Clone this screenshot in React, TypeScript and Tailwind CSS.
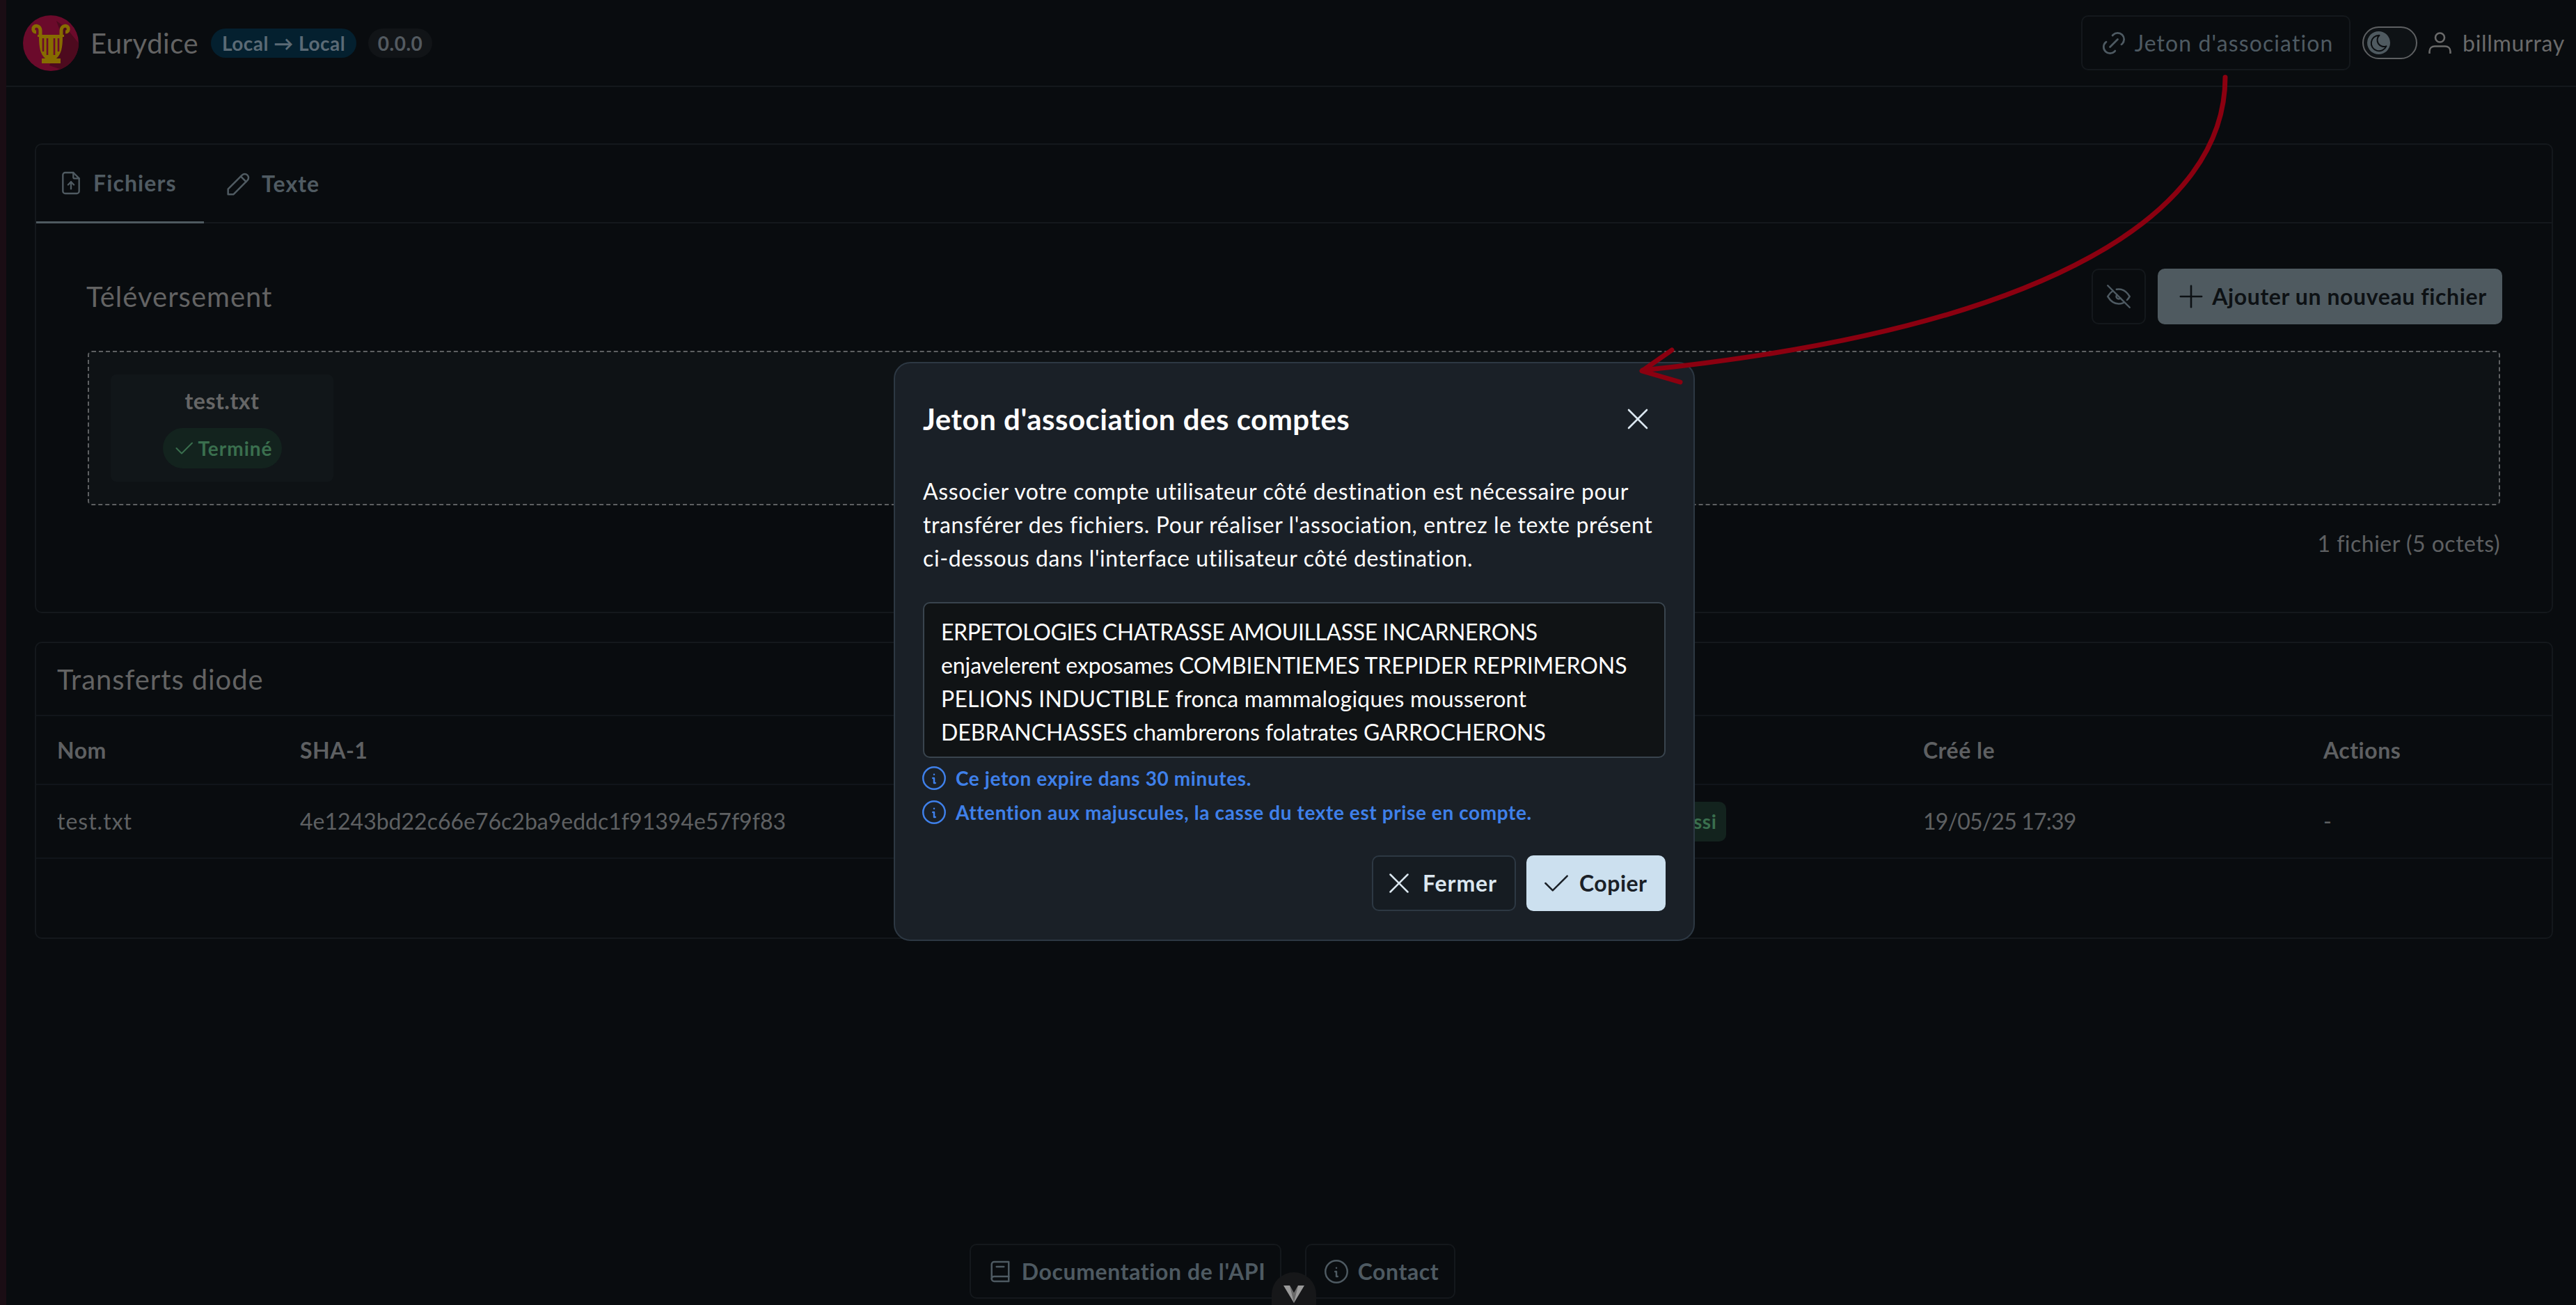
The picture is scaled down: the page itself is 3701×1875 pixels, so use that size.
import { TbBook2, TbCheck, TbEyeOff, TbFileUpload, TbInfoCircle, TbLink, TbMoon, TbPencil, TbPlus, TbX } from 'react-icons/tb'

function Logo() {
  return (
    <svg viewBox="0 0 80 80" className="w-[80px] h-[80px] shrink-0">
      <circle cx="40" cy="40" r="40" fill="#6b0a2b" />
      <path d="M48 8 L62 18 L80 40 A40 40 0 0 1 54 77.5 L38 72 L56 30 Z" fill="#4d0a1e" />
      <g fill="none" stroke="#866b00" strokeWidth="5">
        <path d="M25 30 V22 C25 15 17 13 15 18 C14 22 16 24 19 24" />
        <path d="M55 30 V22 C55 15 63 13 65 18 C66 22 64 24 61 24" />
      </g>
      <path d="M21 28 H59 V31 H57 C57 46 55 56 48 62 H32 C25 56 23 46 23 31 H21 Z" fill="#866b00" />
      <path d="M29 33 V52 M35 33 V57 M45 33 V57 M51 33 V52" stroke="#6b0a2b" strokeWidth="2.6" />
      <rect x="27" y="62" width="27" height="7" fill="#866b00" />
    </svg>
  )
}

function UserGlyph() {
  return (
    <svg viewBox="0 0 33 31" className="ml-[16px] w-[33px] h-[31px]" fill="none" stroke="#6a6a6a" strokeWidth="2.6">
      <circle cx="16.5" cy="8" r="6.5" />
      <path d="M1.5 31 V28 C1.5 23 5 20.5 9 20.5 H24 C28 20.5 31.5 23 31.5 28 V31" />
    </svg>
  )
}

function Arrow() {
  return (
    <svg viewBox="0 0 3701 1875" className="absolute inset-0 w-[3701px] h-[1875px] pointer-events-none z-20">
      <g fill="none" stroke="#8b0010" strokeWidth="7" strokeLinecap="round" strokeLinejoin="round">
        <path d="M3197 111 C3197 300 2960 470 2360 532" />
        <path d="M2402 503 L2359 533 L2414 549" />
      </g>
    </svg>
  )
}

function Modal() {
  return (
    <div className="absolute left-[1284px] top-[520px] w-[1151px] h-[832px] z-10 bg-[#1a2027] border-2 border-[#2d3843] rounded-[24px] px-[40px] text-white">
      <div className="h-[160px] flex items-center justify-between">
        <h2 className="text-[42px] font-bold tracking-[0.5px]">Jeton d'association des comptes</h2>
        <TbX strokeWidth={1.2} className="w-[52px] h-[52px] mr-[14px] text-[#dbe7f0]" />
      </div>
      <p className="text-[32px] leading-[48px] tracking-[0.6px]">
        Associer votre compte utilisateur côté destination est nécessaire pour transférer des fichiers. Pour réaliser
        l'association, entrez le texte présent <span className="whitespace-nowrap">ci-dessous</span> dans l'interface utilisateur côté destination.
      </p>
      <div className="mt-[39px] h-[224px] bg-[#101315] border-2 border-[#39444e] rounded-[10px] px-[24px] py-[17px] text-[32px] leading-[48px] tracking-normal">
        <div className="tracking-[-0.4px]">ERPETOLOGIES CHATRASSE AMOUILLASSE INCARNERONS</div>
        <div className="tracking-[-0.1px]">enjavelerent exposames COMBIENTIEMES TREPIDER REPRIMERONS</div>
        <div className="tracking-[0.2px]">PELIONS INDUCTIBLE fronca mammalogiques mousseront</div>
        <div>DEBRANCHASSES chambrerons folatrates GARROCHERONS</div>
      </div>
      <div className="mt-[9px] flex flex-col gap-[9px] text-[#3f80ea] text-[28px] font-bold tracking-[0.6px]">
        <div className="flex items-center gap-[10px] h-[40px] -ml-[5px]">
          <TbInfoCircle strokeWidth={1.4} className="w-[42px] h-[42px]" />
          <span>Ce jeton expire dans 30 minutes.</span>
        </div>
        <div className="flex items-center gap-[10px] h-[40px] -ml-[5px]">
          <TbInfoCircle strokeWidth={1.4} className="w-[42px] h-[42px]" />
          <span>Attention aux majuscules, la casse du texte est prise en compte.</span>
        </div>
      </div>
      <div className="mt-[42px] flex justify-end gap-[15px]">
        <button className="w-[207px] h-[80px] flex items-center pl-[12px] gap-[9px] bg-[#161c22] border-2 border-[#2d3843] rounded-[10px] text-[32px] font-bold tracking-[0.9px] text-[#dbe7f0]">
          <TbX strokeWidth={1.2} className="w-[50px] h-[50px]" />
          Fermer
        </button>
        <button className="w-[200px] h-[80px] flex items-center pl-[17px] gap-[9px] bg-[#cce0ef] rounded-[10px] text-[32px] font-bold text-[#1a2027]">
          <TbCheck strokeWidth={1.2} className="w-[50px] h-[50px]" />
          Copier
        </button>
      </div>
    </div>
  )
}

export default function App() {
  return (
    <div className="relative w-[3701px] h-[1875px] overflow-hidden flex bg-[#090c0f] text-[#5e6062] tracking-[0.5px] font-['Lato',sans-serif]">
      <div className="w-[9px] shrink-0 bg-[#1a0d14]" />
      <div className="flex-1 flex flex-col min-w-0">
        <header className="h-[125px] shrink-0 border-b-2 border-[#14181c] flex items-center pl-[24px] pr-[16px]">
          <Logo />
          <span className="ml-[17px] text-[40px] text-[#636363]">Eurydice</span>
          <span className="ml-[18px] h-[42px] w-[209px] flex items-center justify-center rounded-full bg-[#04202f] text-[28px] font-bold text-[#5b6a75]">Local → Local</span>
          <span className="ml-[17px] h-[42px] w-[92px] flex items-center justify-center rounded-full bg-[#111417] text-[28px] font-bold text-[#535a60]">0.0.0</span>
          <button className="ml-auto w-[387px] h-[79px] flex items-center justify-center gap-[8px] border-2 border-[#14181c] rounded-[10px] text-[32px] tracking-[1.1px] text-[#4e5a62]">
            <TbLink strokeWidth={1.5} className="w-[44px] h-[44px]" />
            Jeton d'association
          </button>
          <div className="ml-[17px] w-[79px] h-[47px] rounded-full border-2 border-[#5e6062] bg-[#0e1215] flex items-center pl-[5px]">
            <span className="w-[33px] h-[33px] rounded-full bg-[#4f5a60] flex items-center justify-center">
              <TbMoon strokeWidth={1.6} className="w-[30px] h-[30px] text-[#0b0e11]" />
            </span>
          </div>
          <UserGlyph />
          <span className="ml-[16px] text-[32px] tracking-[0.7px] text-[#6a6a6a]">billmurray</span>
        </header>

        <main className="pt-[81px] pl-[41px] pr-[33px] flex flex-col gap-[41px]">
          <section className="h-[675px] border-2 border-[#14181c] rounded-[10px]">
            <div className="h-[113px] border-b-2 border-[#14181c] flex">
              <div className="w-[241px] h-[113px] border-b-[3px] border-[#4f5a60] flex items-center pl-[30px] gap-[12px] text-[#505b62] text-[32px] font-bold tracking-[1.1px]">
                <TbFileUpload strokeWidth={1.4} className="w-[40px] h-[40px]" />
                Fichiers
              </div>
              <div className="flex items-center pl-[27px] gap-[10px] text-[#505b62] text-[32px] font-bold tracking-[1.1px]">
                <TbPencil strokeWidth={1.3} className="w-[46px] h-[46px]" />
                Texte
              </div>
            </div>
            <div className="pl-[72px] pr-[74px] pt-[65px]">
              <div className="h-[80px] -mr-[3px] flex items-center justify-between">
                <h3 className="text-[40px] tracking-[1px] text-[#636363]">Téléversement</h3>
                <div className="flex gap-[17px]">
                  <button className="w-[78px] h-[80px] flex items-center justify-center border-2 border-[#14181c] rounded-[10px] text-[#4e5a62]">
                    <TbEyeOff strokeWidth={1.4} className="w-[42px] h-[42px]" />
                  </button>
                  <button className="w-[495px] h-[80px] flex items-center justify-center gap-[4px] bg-[#4f5a60] rounded-[10px] text-[32px] font-bold tracking-[0.6px] text-[#0d1114]">
                    <TbPlus strokeWidth={1.2} className="w-[52px] h-[52px]" />
                    Ajouter un nouveau fichier
                  </button>
                </div>
              </div>
              <div className="mt-[38px] ml-[2px] h-[222px] bg-[#0e1215] border-2 border-dashed border-[#5e6062] rounded-[6px] pl-[31px] pt-[32px]">
                <div className="w-[320px] h-[154px] bg-[#111619] rounded-[8px] flex flex-col items-center pt-[14px]">
                  <span className="text-[32px] font-bold text-[#666666]">test.txt</span>
                  <span className="mt-[15px] w-[171px] h-[58px] rounded-full bg-[#13231e] flex items-center justify-center gap-[2px] text-[28px] font-bold tracking-[1px] text-[#3a6f4e]">
                    <TbCheck strokeWidth={1.3} className="w-[36px] h-[36px]" />
                    Terminé
                  </span>
                </div>
              </div>
              <div className="mt-[31px] text-right text-[32px]">1 fichier (5 octets)</div>
            </div>
          </section>

          <section className="h-[427px] border-2 border-[#14181c] rounded-[10px]">
            <h3 className="h-[105px] border-b-2 border-[#11151a] flex items-center pl-[30px] text-[40px] tracking-[0.9px] text-[#636363]">Transferts diode</h3>
            <div className="h-[99px] border-b-2 border-[#11151a] grid grid-cols-[349px_1939px_393px_575px_1fr] items-center pl-[30px] text-[32px] font-bold">
              <span>Nom</span>
              <span>SHA-1</span>
              <span />
              <span>Créé le</span>
              <span>Actions</span>
            </div>
            <div className="h-[106px] border-b-2 border-[#11151a] grid grid-cols-[349px_1939px_393px_575px_1fr] items-center pl-[30px] text-[32px]">
              <span className="tracking-[1px]">test.txt</span>
              <span className="tracking-normal">4e1243bd22c66e76c2ba9eddc1f91394e57f9f83</span>
              <span className="w-[110px] h-[57px] rounded-[10px] bg-[#13231e] flex items-center justify-center text-[28px] font-bold text-[#3a6f4e]">Réussi</span>
              <span className="tracking-[-0.8px]">19/05/25 17:39</span>
              <span>-</span>
            </div>
          </section>
        </main>

        <footer className="mt-auto h-[88px] shrink-0 flex justify-center gap-[34px] pr-[226px] text-[#4e5a62] text-[32px] font-bold tracking-[0.6px]">
          <button className="w-[448px] h-[79px] flex items-center justify-center gap-[10px] border-2 border-[#14181c] rounded-[10px]">
            <TbBook2 strokeWidth={1.4} className="w-[42px] h-[42px]" />
            Documentation de l'API
          </button>
          <button className="w-[216px] h-[79px] flex items-center justify-center gap-[10px] border-2 border-[#14181c] rounded-[10px]">
            <TbInfoCircle strokeWidth={1.4} className="w-[42px] h-[42px]" />
            Contact
          </button>
        </footer>
      </div>

      <div className="absolute left-[1827px] top-[1828px] w-[64px] h-[47px] rounded-t-[32px] bg-[#161719] flex justify-center pt-[19px]">
        <svg viewBox="0 0 30 25" className="w-[30px] h-[25px]">
          <path d="M0 0 H9 L15 11 L21 0 H30 L15 25 Z" fill="#9a9a9a" />
          <path d="M9 0 L15 11 L21 0 L15 25 Z" fill="#6a6a6a" />
        </svg>
      </div>
      <Arrow />
      <Modal />
    </div>
  )
}
